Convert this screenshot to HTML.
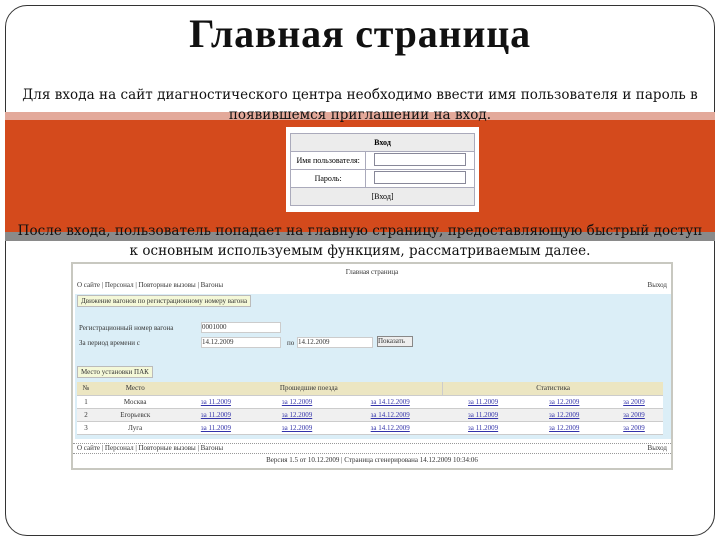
<!DOCTYPE html>
<html><head><meta charset="utf-8"><style>
*{margin:0;padding:0;box-sizing:border-box}
body{width:720px;height:540px;background:#fff;position:relative;overflow:hidden;font-family:"Liberation Serif","DejaVu Serif",serif}
.frame{position:absolute;left:5px;top:5px;width:710px;height:531px;border:1px solid #333;border-radius:22px}
.t{position:absolute;left:0;width:720px;text-align:center;color:#111}
.title{top:10px;font-size:40px;font-weight:bold;letter-spacing:0.8px}
.p{line-height:19px;font-family:"DejaVu Serif",serif;font-size:13.5px;letter-spacing:0.05px;white-space:nowrap}
.band{position:absolute;left:5px;width:710px}
.login{position:absolute;left:286px;top:127px;width:193px;height:85px;background:#fff;padding:6px 4px}
.login table{width:100%;border-collapse:collapse;font-size:8px;font-family:"Liberation Serif",serif}
.login td{border:1px solid #aab;height:18px;text-align:center}
.inp{display:inline-block;width:92px;height:13px;border:1px solid #889;background:#fff}
.ss{position:absolute;left:71px;top:262px;width:602px;height:208px;border:2px solid #c8c8c0;background:#fff;font-size:7px;font-family:"Liberation Serif",serif;color:#333}
.blue{position:absolute;left:2px;top:30px;width:596px;height:145px;background:#dbeef7}
.tab{position:absolute;background:#f4f8d8;border:1px solid #bbb;font-size:7px;padding:1px 3px}
.fi{position:absolute;height:11px;background:#fff;border:1px solid #ccc;font-size:7px}
.tbl{position:absolute;left:4px;top:118px;width:586px;border-collapse:collapse;font-size:7px}
.tbl td{height:13px;text-align:center;border-bottom:1px solid #ccc}
.tbl tr.h td{background:#ece6c2}
.tbl tr.r td{background:#fff}
.tbl tr.g td{background:#f0f0f0}
a{color:#33a;text-decoration:underline}
</style></head><body>
<div class="frame"></div>
<div class="t title">Главная страница</div>
<div class="band" style="top:112px;height:8px;background:#e3a99a"></div>
<div class="band" style="top:120px;height:113px;background:#d44a1c"></div>
<div class="band" style="top:232px;height:9px;background:#8a8a8a"></div>
<div class="t p" style="top:86px">Для входа на сайт диагностического центра необходимо ввести имя пользователя и пароль в</div>
<div class="t p" style="top:106px">появившемся приглашении на вход.</div>
<div class="login"><table>
<tr><td colspan="2" style="background:#ececec;font-weight:bold">Вход</td></tr>
<tr><td>Имя пользователя:</td><td><span class="inp"></span></td></tr>
<tr><td>Пароль:</td><td><span class="inp"></span></td></tr>
<tr><td colspan="2" style="background:#ececec">[Вход]</td></tr></table></div>
<div class="t p" style="top:222px">После входа, пользователь попадает на главную страницу, предоставляющую быстрый доступ</div>
<div class="t p" style="top:242px">к основным используемым функциям, рассматриваемым далее.</div>
<div class="ss">
<div style="position:absolute;top:4px;width:100%;text-align:center">Главная страница</div>
<div style="position:absolute;top:17px;left:4px">О сайте | Персонал | Повторные вызовы | Вагоны</div>
<div style="position:absolute;top:17px;right:4px">Выход</div>
<div class="blue">
<div class="tab" style="left:2px;top:1px">Движение вагонов по регистрационному номеру вагона</div>
<div style="position:absolute;left:4px;top:30px">Регистрационный номер вагона</div>
<div class="fi" style="left:126px;top:28px;width:80px">0001000</div>
<div style="position:absolute;left:4px;top:45px">За период времени с</div>
<div class="fi" style="left:126px;top:43px;width:80px">14.12.2009</div>
<div style="position:absolute;left:212px;top:45px">по</div>
<div class="fi" style="left:222px;top:43px;width:76px">14.12.2009</div>
<div class="fi" style="left:302px;top:42px;width:36px;background:#eee;border-color:#888">Показать</div>
<div class="tab" style="left:2px;top:72px">Место установки ПАК</div>
</div>
<table class="tbl">
<tr class="h"><td>№</td><td>Место</td><td colspan="3">Прошедшие поезда</td><td colspan="3" style="border-left:1px solid #ccc">Статистика</td></tr>
<tr class="r"><td>1</td><td>Москва</td><td><a>за 11.2009</a></td><td><a>за 12.2009</a></td><td><a>за 14.12.2009</a></td><td><a>за 11.2009</a></td><td><a>за 12.2009</a></td><td><a>за 2009</a></td></tr>
<tr class="g"><td>2</td><td>Егорьевск</td><td><a>за 11.2009</a></td><td><a>за 12.2009</a></td><td><a>за 14.12.2009</a></td><td><a>за 11.2009</a></td><td><a>за 12.2009</a></td><td><a>за 2009</a></td></tr>
<tr class="r"><td>3</td><td>Луга</td><td><a>за 11.2009</a></td><td><a>за 12.2009</a></td><td><a>за 14.12.2009</a></td><td><a>за 11.2009</a></td><td><a>за 12.2009</a></td><td><a>за 2009</a></td></tr>
</table>
<div style="position:absolute;top:179px;left:0;width:100%;border-top:1px dotted #999"></div>
<div style="position:absolute;top:180px;left:4px">О сайте | Персонал | Повторные вызовы | Вагоны</div>
<div style="position:absolute;top:180px;right:4px">Выход</div>
<div style="position:absolute;top:189px;left:0;width:100%;border-top:1px dotted #999"></div>
<div style="position:absolute;top:192px;width:100%;text-align:center">Версия 1.5 от 10.12.2009 | Страница сгенерирована 14.12.2009 10:34:06</div>
</div>
</body></html>
